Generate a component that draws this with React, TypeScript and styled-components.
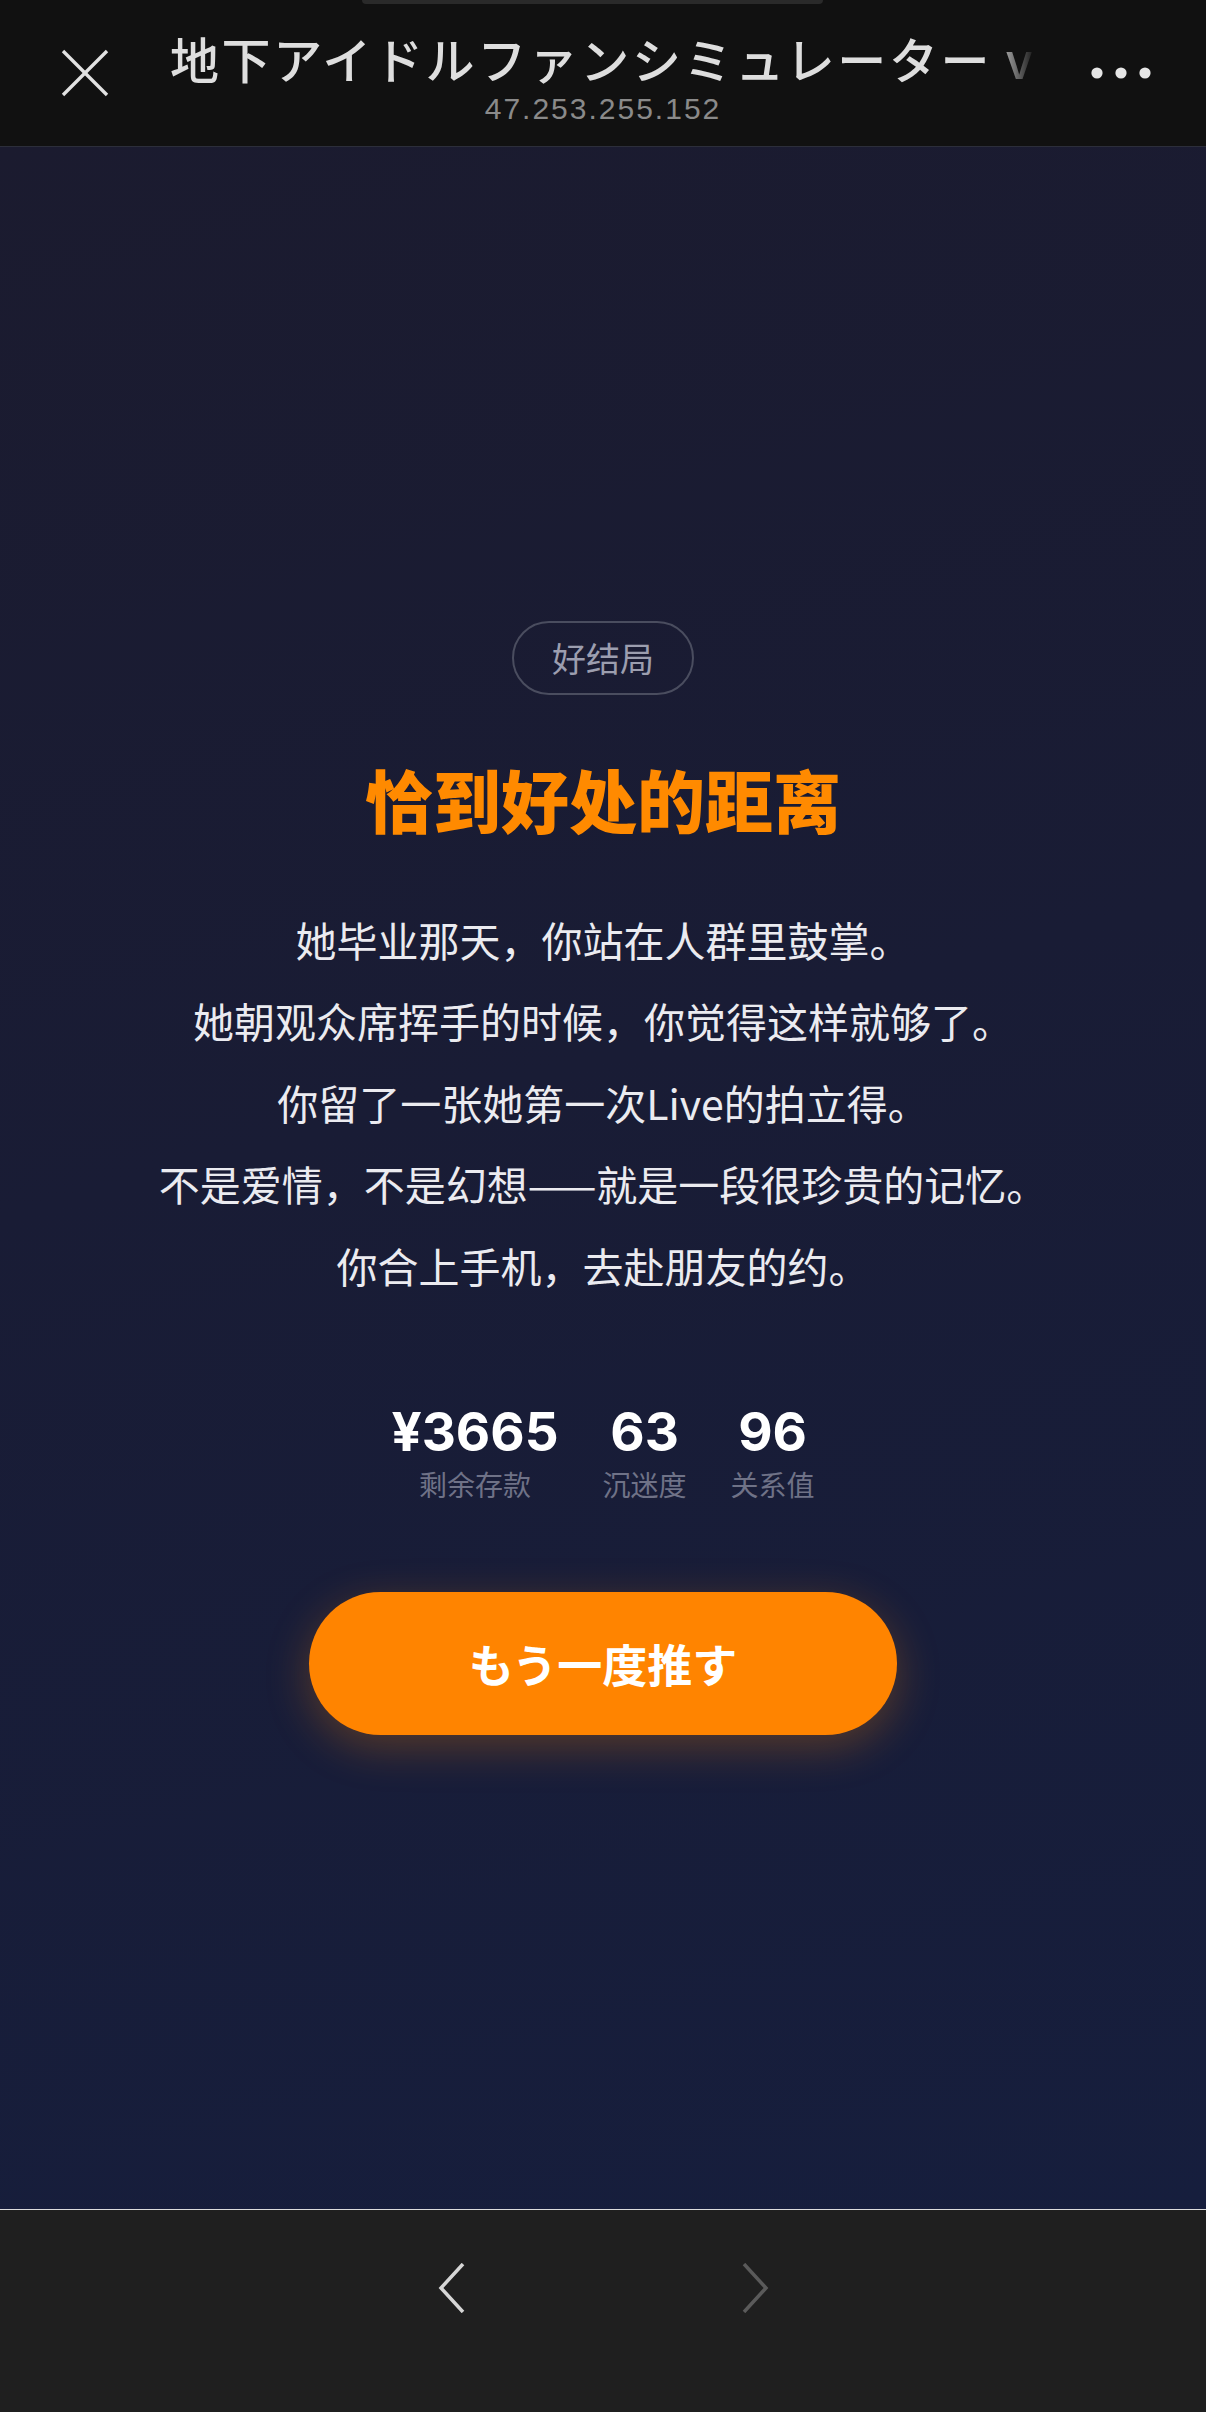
import styled, { createGlobalStyle } from "styled-components";

const GlobalStyle = createGlobalStyle`
  html, body {
    margin: 0;
    padding: 0;
    background: #1f1f1f;
  }
  * {
    box-sizing: border-box;
  }
`;

const CJK = `"Noto Sans CJK SC", "Noto Sans CJK JP", sans-serif`;

const Page = styled.div`
  height: 100vh;
  display: flex;
  flex-direction: column;
  font-family: ${CJK};
`;

const TopBar = styled.header`
  position: relative;
  height: 147px;
  flex-shrink: 0;
  display: grid;
  grid-template-columns: 170px 1fr 170px;
  align-items: center;
  background: #111111;
  border-bottom: 1px solid #2c2e3a;
`;

// bottom edge of the device island peeking over the bar
const Notch = styled.div`
  position: absolute;
  top: 0;
  left: 362px;
  width: 461px;
  height: 4px;
  border-radius: 0 0 4px 4px;
  background: #2a2a2a;
`;

const IconSlot = styled.div`
  display: flex;
  align-items: center;
  justify-content: center;
  height: 100%;
`;

const TitleBlock = styled.div`
  display: flex;
  flex-direction: column;
  align-items: center;
  min-width: 0;
  padding-top: 10px;
`;

const PageTitle = styled.div`
  width: 100%;
  font-family: "Noto Sans CJK JP", sans-serif;
  font-size: 49px;
  font-weight: 500;
  line-height: 56px;
  letter-spacing: 2.6px;
  color: #dedede;
  white-space: nowrap;
  overflow: hidden;
  -webkit-mask-image: linear-gradient(to right, #000 calc(100% - 44px), transparent 100%);
  mask-image: linear-gradient(to right, #000 calc(100% - 44px), transparent 100%);
`;

const Host = styled.div`
  margin-top: 6px;
  font-family: "Liberation Sans", Arial, sans-serif;
  font-size: 30px;
  line-height: 34px;
  letter-spacing: 2px;
  color: #8a8a8a;
`;

const Stage = styled.main`
  flex: 1;
  display: flex;
  flex-direction: column;
  align-items: center;
  justify-content: center;
  background: linear-gradient(165deg, #1b1b2f 0%, #191c35 45%, #161e3d 100%);
`;

const Badge = styled.div`
  height: 74px;
  padding: 0 38px;
  display: flex;
  align-items: center;
  border: 2px solid #4a4d5f;
  border-radius: 40px;
  font-size: 34px;
  color: #9c9eaf;
`;

const EndingTitle = styled.h1`
  margin: 64px 0 0;
  font-size: 68px;
  line-height: 80px;
  font-weight: 900;
  color: #ff8a00;
`;

const Story = styled.div`
  margin-top: 60px;
  display: flex;
  flex-direction: column;
  align-items: center;
`;

const StoryLine = styled.p`
  margin: 0;
  font-size: 41px;
  line-height: 81.5px;
  color: #ebebf0;
  white-space: nowrap;
`;

const Stats = styled.div`
  margin-top: 96px;
  display: flex;
  gap: 44px;
`;

const Stat = styled.div`
  min-width: 84px;
  display: flex;
  flex-direction: column;
  align-items: center;
`;

const StatValue = styled.div`
  font-family: Inter, "Liberation Sans", sans-serif;
  font-size: 53px;
  font-weight: 700;
  line-height: 60px;
  color: #ffffff;
`;

const StatLabel = styled.div`
  margin-top: 4px;
  font-size: 28px;
  line-height: 36px;
  color: #6f7287;
`;

const RetryButton = styled.button`
  margin-top: 90px;
  width: 588px;
  height: 143px;
  border: none;
  border-radius: 72px;
  background: #ff8400;
  box-shadow: 0 12px 44px rgba(255, 132, 0, 0.28);
  font-family: "Noto Sans CJK JP", sans-serif;
  font-size: 45px;
  font-weight: 700;
  color: #ffffff;
  cursor: pointer;
`;

const BottomBar = styled.nav`
  height: 203px;
  flex-shrink: 0;
  border-top: 1px solid #dcdcdc;
  background: #1f1f1f;
  padding-top: 53px;
  display: flex;
  justify-content: center;
  align-items: flex-start;
  gap: 277px;
`;

const Chevron = ({ dir, color }: { dir: "left" | "right"; color: string }) => (
  <svg width="27" height="50" viewBox="0 0 27 50" fill="none">
    <polyline
      points={dir === "left" ? "25,1 3,25 25,49" : "2,1 24,25 2,49"}
      stroke={color}
      strokeWidth="3.5"
      strokeLinejoin="miter"
    />
  </svg>
);

const lines = [
  "她毕业那天，你站在人群里鼓掌。",
  "她朝观众席挥手的时候，你觉得这样就够了。",
  "你留了一张她第一次Live的拍立得。",
  "不是爱情，不是幻想——就是一段很珍贵的记忆。",
  "你合上手机，去赴朋友的约。",
];

const stats = [
  { value: "¥3665", label: "剩余存款" },
  { value: "63", label: "沉迷度" },
  { value: "96", label: "关系值" },
];

export default function App() {
  return (
    <Page>
      <GlobalStyle />
      <TopBar>
        <Notch />
        <IconSlot>
          <svg width="48" height="48" viewBox="0 0 48 48">
            <line x1="2" y1="2" x2="46" y2="46" stroke="#e2e2e2" strokeWidth="3.4" />
            <line x1="46" y1="2" x2="2" y2="46" stroke="#e2e2e2" strokeWidth="3.4" />
          </svg>
        </IconSlot>
        <TitleBlock>
          <PageTitle>地下アイドルファンシミュレーター v1.0</PageTitle>
          <Host>47.253.255.152</Host>
        </TitleBlock>
        <IconSlot>
          <svg width="60" height="12" viewBox="0 0 60 12">
            <circle cx="6" cy="6" r="5.6" fill="#e6e6e6" />
            <circle cx="30" cy="6" r="5.6" fill="#e6e6e6" />
            <circle cx="54" cy="6" r="5.6" fill="#e6e6e6" />
          </svg>
        </IconSlot>
      </TopBar>

      <Stage>
        <Badge>好结局</Badge>
        <EndingTitle>恰到好处的距离</EndingTitle>
        <Story>
          {lines.map((l) => (
            <StoryLine key={l}>{l}</StoryLine>
          ))}
        </Story>
        <Stats>
          {stats.map((s) => (
            <Stat key={s.label}>
              <StatValue>{s.value}</StatValue>
              <StatLabel>{s.label}</StatLabel>
            </Stat>
          ))}
        </Stats>
        <RetryButton>もう一度推す</RetryButton>
      </Stage>

      <BottomBar>
        <Chevron dir="left" color="#d6d6d6" />
        <Chevron dir="right" color="#5a5a5a" />
      </BottomBar>
    </Page>
  );
}
